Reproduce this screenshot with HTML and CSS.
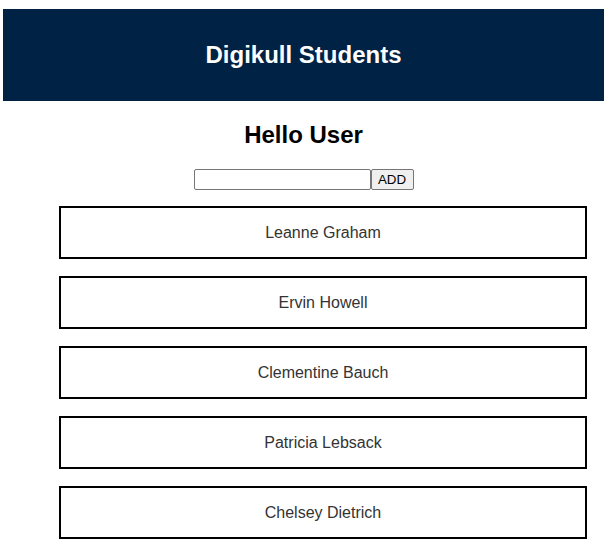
FILE: index.html
```html
<!DOCTYPE html>
<html>
<head>
<meta charset="utf-8">
<link rel="stylesheet" href="styles.css">
</head>
<body>
<header class="top-bar">
  <h1 class="title">Digikull Students</h1>
</header>
<main class="content">
  <h2 class="greeting">Hello User</h2>
  <form class="add-form">
    <input class="add-input" type="text">
    <button class="add-btn" type="button">ADD</button>
  </form>
  <ul class="student-list">
    <li class="student-card">Leanne Graham</li>
    <li class="student-card">Ervin Howell</li>
    <li class="student-card">Clementine Bauch</li>
    <li class="student-card">Patricia Lebsack</li>
    <li class="student-card">Chelsey Dietrich</li>
  </ul>
</main>
</body>
</html>
```

FILE: styles.css
```css
html, body {
  margin: 0;
  padding: 0;
  background: #ffffff;
  font-family: "Liberation Sans", Arial, sans-serif;
}

.top-bar {
  margin: 9px 6px 0 3px;
  height: 92px;
  background: #002245;
  display: flex;
  align-items: center;
  justify-content: center;
}

.title {
  margin: 0;
  color: #ffffff;
  font-size: 24px;
  font-weight: bold;
  line-height: 28px;
}

.content {
  margin: 0 6px 0 3px;
  display: flex;
  flex-direction: column;
  align-items: center;
}

.greeting {
  margin: 20px 0 0 0;
  font-size: 24px;
  font-weight: bold;
  line-height: 28px;
  color: #000000;
}

.add-form {
  display: flex;
  margin: 20px 0 0 0;
  height: 21px;
}

.add-input {
  box-sizing: border-box;
  width: 177px;
  height: 21px;
  margin: 0;
  padding: 1px 2px;
  border: 1px solid #767676;
  border-radius: 2px;
  font-family: "Liberation Sans", Arial, sans-serif;
  font-size: 13.33px;
}

.add-btn {
  box-sizing: border-box;
  width: 43px;
  height: 21px;
  margin: 0;
  padding: 0;
  border: 1px solid #767676;
  border-radius: 2px;
  background: #efefef;
  color: #000000;
  font-family: "Liberation Sans", Arial, sans-serif;
  font-size: 13.33px;
}

.student-list {
  list-style: none;
  margin: 16px 0 0 56px;
  padding: 0;
  align-self: flex-start;
  display: flex;
  flex-direction: column;
  gap: 17px;
}

.student-card {
  box-sizing: border-box;
  width: 528px;
  height: 53px;
  border: 2px solid #000000;
  display: flex;
  align-items: center;
  justify-content: center;
  font-size: 16px;
  color: #333333;
}
```
